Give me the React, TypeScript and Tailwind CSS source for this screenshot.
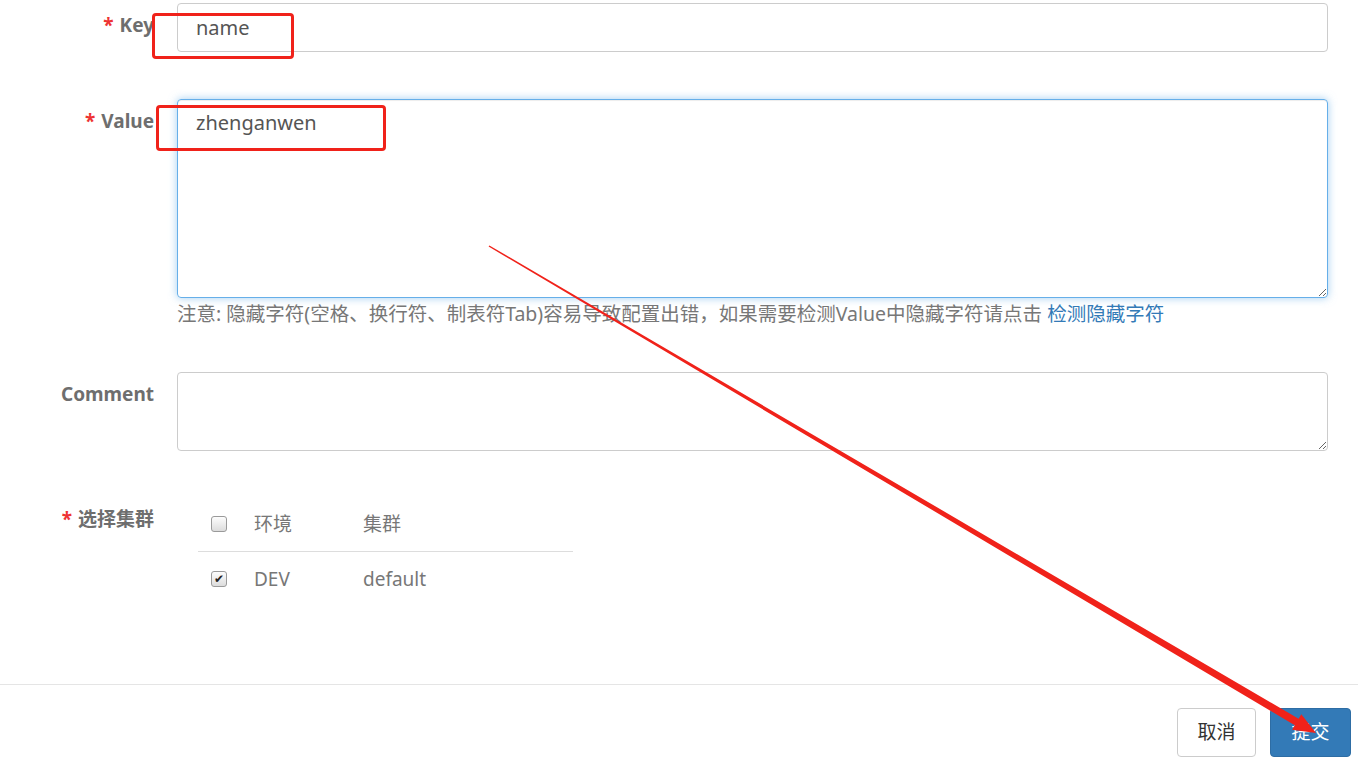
import React from "react";

const FONT = "font-['Noto_Sans','Noto_Sans_CJK_SC',sans-serif]";

function Label({ text, required }: { text: string; required?: boolean }) {
  return (
    <div className="w-[154px] shrink-0 pt-[9px] text-right text-[19px] font-bold leading-[27px] text-[#6e6e6e] whitespace-nowrap">
      {required && <span className="mr-[6px] text-[#e33]">*</span>}
      {text}
    </div>
  );
}

function Checkbox({ checked }: { checked?: boolean }) {
  return (
    <span className="flex h-[16px] w-[16px] items-center justify-center rounded-[3px] border border-[#9a9a9a] bg-gradient-to-b from-[#fdfdfd] to-[#dcdcdc] text-[12px] leading-none text-[#222]">
      {checked ? "✔" : ""}
    </span>
  );
}

export default function App() {
  return (
    <div className={`relative h-[761px] w-full overflow-hidden bg-white ${FONT}`}>
      <div className="pt-[3px]">
        {/* Key */}
        <div className="flex">
          <Label text="Key" required />
          <input
            readOnly
            defaultValue="name"
            className="ml-[23px] h-[49px] w-[1151px] rounded-[4px] border border-[#cccccc] px-[18px] text-[20px] text-[#555] outline-none"
          />
        </div>

        {/* Value */}
        <div className="mt-[47px] flex">
          <Label text="Value" required />
          <div className="ml-[23px] w-[1151px]">
            <textarea
              readOnly
              defaultValue="zhenganwen"
              className="block h-[199px] w-full rounded-[4px] border border-[#66afe9] px-[18px] py-[8px] text-[20px] text-[#555] shadow-[0_0_8px_rgba(102,175,233,0.6),inset_0_1px_1px_rgba(0,0,0,0.075)] outline-none"
            />
            <p className="mt-[3px] text-[19.5px] leading-[25px] text-[#777]">
              注意: 隐藏字符(空格、换行符、制表符Tab)容易导致配置出错，如果需要检测Value中隐藏字符请点击{" "}
              <span className="text-[#337ab7]">检测隐藏字符</span>
            </p>
          </div>
        </div>

        {/* Comment */}
        <div className="mt-[46px] flex">
          <Label text="Comment" />
          <textarea
            readOnly
            className="ml-[23px] block h-[79px] w-[1151px] rounded-[4px] border border-[#cccccc] outline-none"
          />
        </div>

        {/* 选择集群 */}
        <div className="mt-[46px] flex">
          <Label text="选择集群" required />
          <div className="ml-[44px] w-[375px] text-[19px] text-[#777]">
            <div className="flex h-[55px] items-center border-b border-[#dddddd]">
              <div className="w-[43px] pl-[13px]">
                <Checkbox />
              </div>
              <div className="w-[109px] pl-[13px]">环境</div>
              <div className="pl-[13px]">集群</div>
            </div>
            <div className="flex h-[54px] items-center">
              <div className="w-[43px] pl-[13px]">
                <Checkbox checked />
              </div>
              <div className="w-[109px] pl-[13px]">DEV</div>
              <div className="pl-[13px]">default</div>
            </div>
          </div>
        </div>

        {/* Footer */}
        <div className="mt-[78px] flex justify-end gap-[14px] border-t border-[#e5e5e5] pr-[7px] pt-[23px]">
          <button className="h-[49px] w-[79px] rounded-[4px] border border-[#cccccc] bg-white text-[19px] text-[#333]">
            取消
          </button>
          <button className="h-[49px] w-[81px] rounded-[4px] border border-[#2e6da4] bg-[#337ab7] text-[19px] text-white">
            提交
          </button>
        </div>
      </div>

      {/* annotations */}
      <div className="absolute left-[152px] top-[13px] h-[46px] w-[142px] rounded-[4px] border-[3px] border-[#f0221a]" />
      <div className="absolute left-[156px] top-[105px] h-[46px] w-[230px] rounded-[4px] border-[3px] border-[#f0221a]" />
      <svg className="pointer-events-none absolute left-0 top-0" width="1358" height="761">
        <polygon
          fill="#f0221a"
          points="489.4,245.4 1298.6,718.8 1301.3,714.2 1316,733 1292.1,729.8 1294.8,725.2 488.6,246.6"
        />
      </svg>
    </div>
  );
}
